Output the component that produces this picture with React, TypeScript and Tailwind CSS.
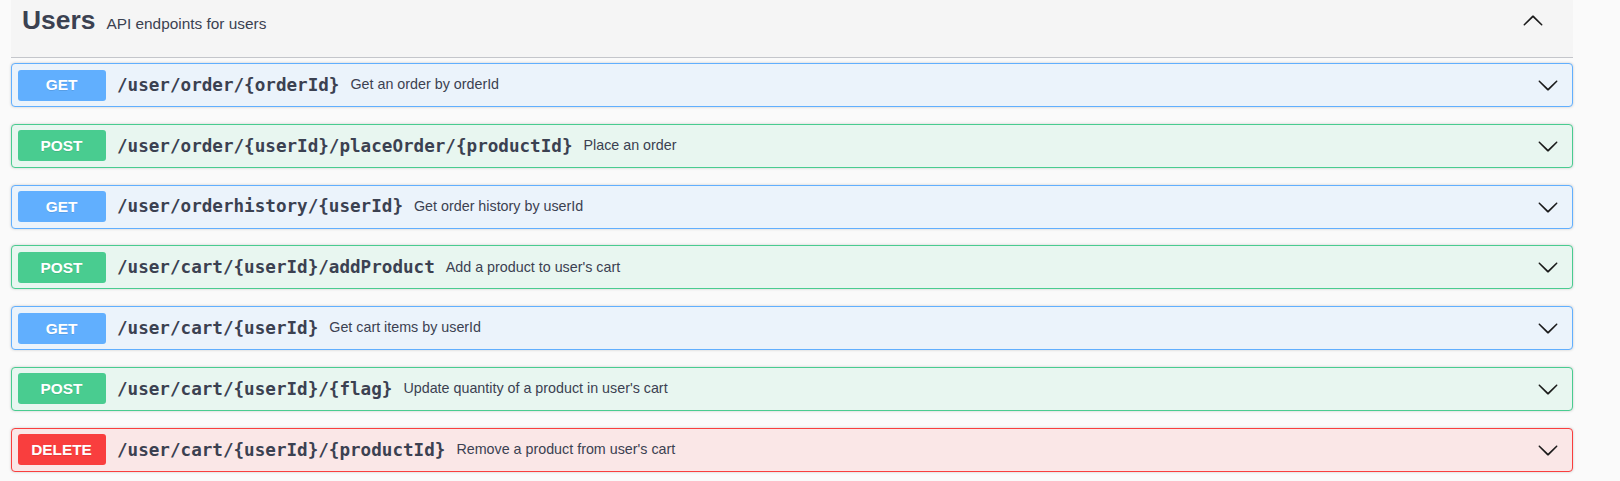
import React from "react";

type Method = "GET" | "POST" | "DELETE";

interface Endpoint {
  method: Method;
  path: string;
  summary: string;
}

const endpoints: Endpoint[] = [
  { method: "GET", path: "/user/order/{orderId}", summary: "Get an order by orderId" },
  { method: "POST", path: "/user/order/{userId}/placeOrder/{productId}", summary: "Place an order" },
  { method: "GET", path: "/user/orderhistory/{userId}", summary: "Get order history by userId" },
  { method: "POST", path: "/user/cart/{userId}/addProduct", summary: "Add a product to user's cart" },
  { method: "GET", path: "/user/cart/{userId}", summary: "Get cart items by userId" },
  { method: "POST", path: "/user/cart/{userId}/{flag}", summary: "Update quantity of a product in user's cart" },
  { method: "DELETE", path: "/user/cart/{userId}/{productId}", summary: "Remove a product from user's cart" },
];

const styles: Record<Method, { block: string; badge: string }> = {
  GET: { block: "bg-[#ebf3fb] border-[#61affe]", badge: "bg-[#61affe]" },
  POST: { block: "bg-[#e8f6f0] border-[#49cc90]", badge: "bg-[#49cc90]" },
  DELETE: { block: "bg-[#fae7e7] border-[#f93e3e]", badge: "bg-[#f93e3e]" },
};

function Arrow({ up = false }: { up?: boolean }) {
  return (
    <svg
      width="22"
      height="22"
      viewBox="0 0 20 20"
      className={up ? "rotate-180 shrink-0" : "shrink-0"}
      fill="#1b1b1b"
    >
      <path d="M17.418 6.109c.272-.268.709-.268.979 0s.271.701 0 .969l-7.908 7.83c-.27.268-.707.268-.979 0l-7.908-7.83c-.27-.268-.27-.701 0-.969.271-.268.709-.268.979 0L10 13.25l7.418-7.141z" />
    </svg>
  );
}

function Opblock({ method, path, summary }: Endpoint) {
  const s = styles[method];
  return (
    <div
      className={`mb-[16.8px] h-[44px] rounded-[4px] border shadow-[0_0_3px_rgba(0,0,0,0.19)] flex items-center pl-[5.5px] pr-[13px] ${s.block}`}
    >
      <span
        className={`w-[88px] h-[31px] shrink-0 rounded-[3px] flex items-center justify-center text-white font-bold text-[15.4px] [text-shadow:0_1px_0_rgba(0,0,0,0.1)] ${s.badge}`}
        style={{ fontFamily: '"Liberation Sans", Arial, sans-serif' }}
      >
        {method}
      </span>
      <span
        className="ml-[11.5px] text-[17.6px] font-bold text-[#3b4151] whitespace-nowrap"
        style={{ fontFamily: '"DejaVu Sans Mono", monospace' }}
      >
        {path}
      </span>
      <span
        className="ml-[11px] text-[14.3px] text-[#3b4151] whitespace-nowrap flex-1"
        style={{ fontFamily: '"Liberation Sans", Arial, sans-serif' }}
      >
        {summary}
      </span>
      <Arrow />
    </div>
  );
}

export default function App() {
  return (
    <div
      className="w-[1620px] h-[481px] bg-[#fafafa] overflow-hidden pl-[11px]"
      style={{ fontFamily: '"Liberation Sans", Arial, sans-serif' }}
    >
      <div className="w-[1562px]">
        <div className="h-[58px] bg-[#f5f5f5] border-b border-[#c4c6cb] mb-[5px]">
          <div className="h-[41px] flex items-center pl-[11px] pr-[29px]">
            <div className="flex items-baseline flex-1">
              <span className="text-[26.4px] font-bold text-[#3b4151]">Users</span>
              <span className="ml-[11px] text-[15.4px] text-[#3b4151]">API endpoints for users</span>
            </div>
            <Arrow up />
          </div>
        </div>
        {endpoints.map((e) => (
          <Opblock key={e.method + e.path} {...e} />
        ))}
      </div>
    </div>
  );
}
